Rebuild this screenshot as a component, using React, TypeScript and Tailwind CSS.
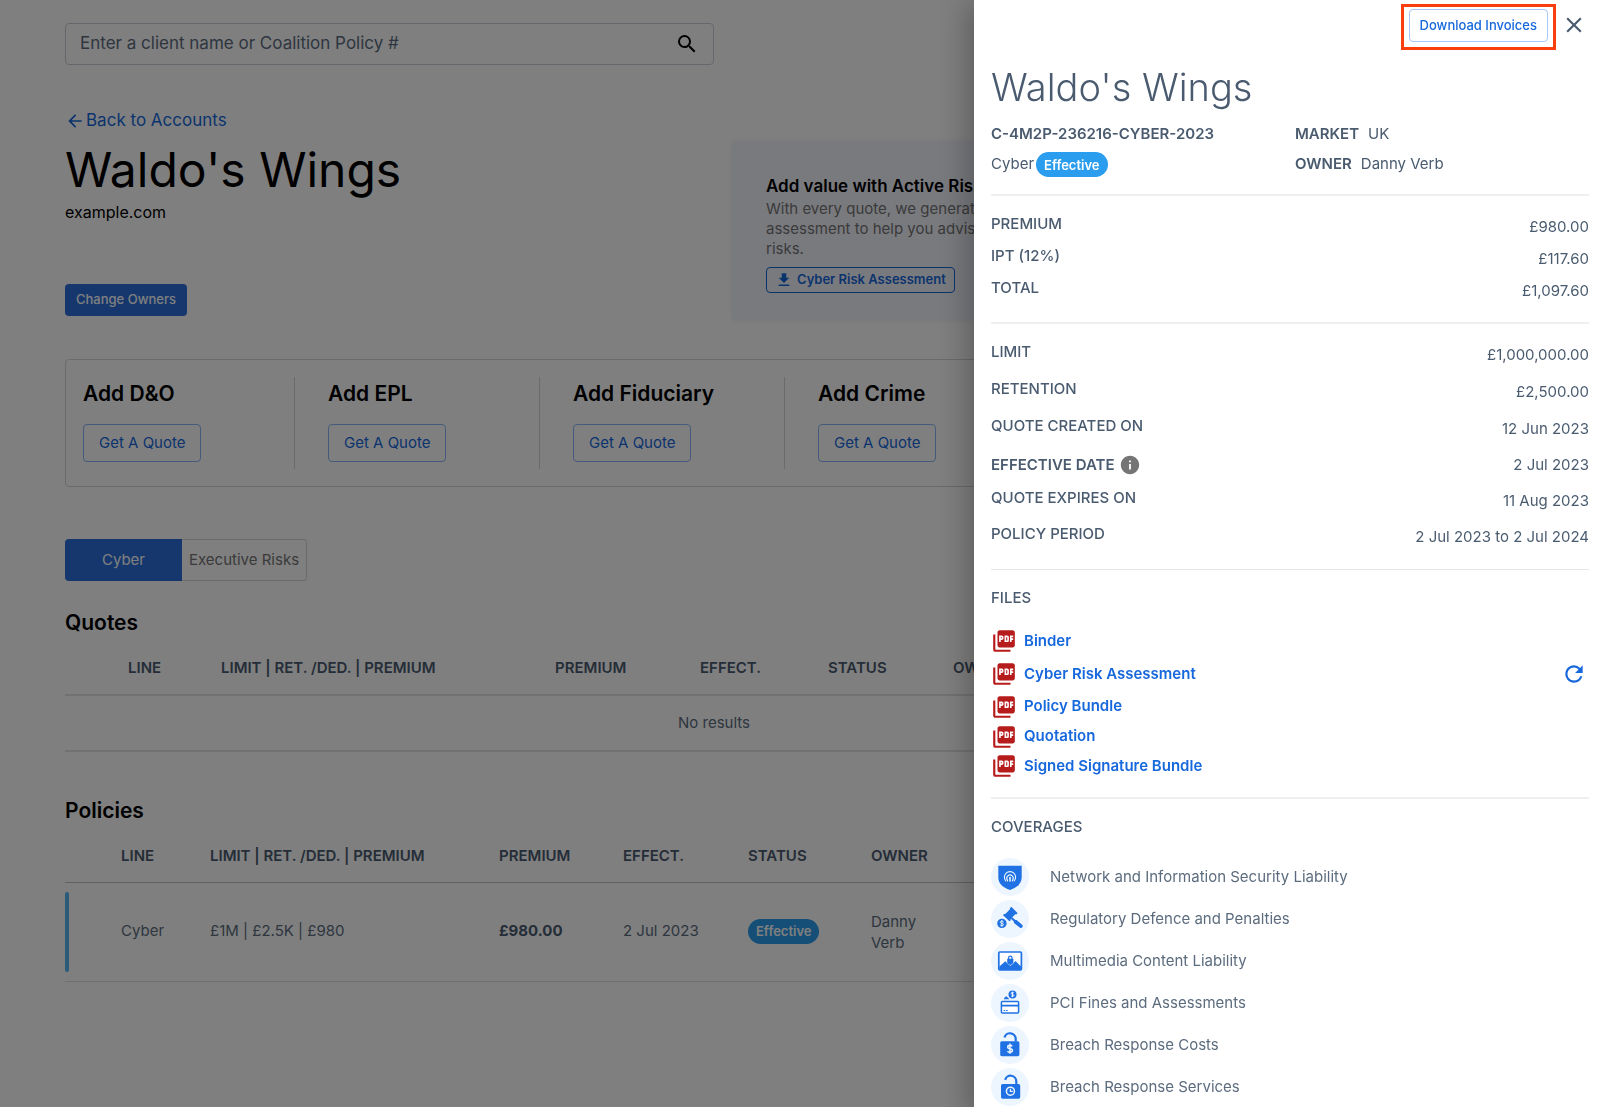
import type { ReactNode } from "react";
import {
  MdArrowBack,
  MdClose,
  MdFileDownload,
  MdInfo,
  MdPictureAsPdf,
  MdRefresh,
  MdSearch,
} from "react-icons/md";

const BLUE = "#2072e4";
const PALE = "#edf6fe";

function StatusPill() {
  return (
    <span className="inline-flex h-[25px] items-center rounded-full bg-[#2a9dee] px-2 text-[13px] font-semibold text-white">
      Effective
    </span>
  );
}

/* ---------- Coverage icons (38 x 38, on a pale disc) ---------- */

function Disc({ children }: { children: ReactNode }) {
  return (
    <svg viewBox="0 0 38 38" className="size-[38px] shrink-0" aria-hidden="true">
      <circle cx="19" cy="19" r="19" fill={PALE} />
      {children}
    </svg>
  );
}

function ShieldIcon() {
  return (
    <Disc>
      <path d="M7.3 7.8h23.4v11.4c0 6-4.2 10.2-11.7 12.8C11.500 29.400 7.300 25.200 7.300 19.200z" fill={BLUE} />
      <g fill="none" stroke={PALE} strokeWidth="1.1" strokeLinecap="round">
        <path d="M14.800 22.900a5.600 5.600 0 1 1 8.400 0" />
        <path d="M16.500 22.900v-.6a3.200 3.200 0 1 1 5 0v.6" />
        <path d="M19 19.600v3.300" strokeWidth="1.600" />
      </g>
    </Disc>
  );
}

function GavelIcon() {
  return (
    <Disc>
      <g fill={BLUE}>
        <path d="M19.300 7.400a1 1 0 0 1 1.500-.1l5.200 5.200a1 1 0 0 1-.9 1.700l-1.100.2-4.300 4.600-.1 1.200a1 1 0 0 1-1.700.5l-5.300-5a1 1 0 0 1 .9-1.700l1.100-.2 4.300-4.500z" />
        <path d="M21.100 17.300l3.300 2.800 1.200-.1 5.500 4.800a1.800 1.800 0 0 1-2.400 2.700l-5.700-4.600-.2-1.500-3-2.700z" />
        <circle cx="10.900" cy="23.400" r="4.700" />
      </g>
      <path
        d="M12.500 21.900c-.4-.6-1-.8-1.600-.8-2.100 0-2.100 2.200 0 2.300 2.200.1 2.200 2.300 0 2.300-.8 0-1.300-.3-1.700-.8M10.900 20.200v6.400"
        fill="none"
        stroke={PALE}
        strokeWidth="1"
      />
    </Disc>
  );
}

function ImageIcon() {
  return (
    <Disc>
      <rect x="7.800" y="10" width="22.600" height="17.800" rx="1" fill="#fff" stroke={BLUE} strokeWidth="1.700" />
      <path d="M8.300 24.500l6-5.300 3.300 3.300 1.800 1.200 1.800-1.200 3.300-3.500 5.500 5.500v3.100H8.300z" fill={BLUE} />
      <path d="M16.200 16.700h6.200v3.600c0 1.200-1.400 1.900-3.100 2.800-1.700-.9-3.100-1.600-3.100-2.800z" fill={BLUE} />
      <path d="M17.600 17v-1.200a1.700 1.700 0 0 1 3.400 0V17" fill="none" stroke={BLUE} strokeWidth="1.200" />
    </Disc>
  );
}

function CardIcon() {
  return (
    <Disc>
      <path d="M12.800 15.300c.2-1.700 1.600-2.300 2.600-3l3.100 3z" fill={BLUE} />
      <circle cx="21.500" cy="10.400" r="4" fill={BLUE} />
      <path
        d="M22.900 9c-.4-.5-.8-.6-1.400-.6-1.700 0-1.700 1.900 0 2 1.800.1 1.800 2 0 2-.7 0-1.100-.3-1.500-.7M21.500 7.700v5.400"
        fill="none"
        stroke={PALE}
        strokeWidth="1"
      />
      <rect x="10.400" y="17.500" width="17.200" height="11.600" rx="1" fill="#fff" stroke={BLUE} strokeWidth="1.500" />
      <path d="M10.400 21.600h17.200" stroke={BLUE} strokeWidth="1.800" />
      <path d="M12.500 26.600h1.600m.8 0h1.800" stroke={BLUE} strokeWidth="1" />
    </Disc>
  );
}

function LockCostIcon() {
  return (
    <Disc>
      <rect x="9.200" y="15.200" width="19.200" height="15" rx="1.600" fill={BLUE} />
      <path d="M24.700 15.600v-2.600a5.700 5.700 0 0 0-11.200-1.500" fill="none" stroke={BLUE} strokeWidth="2.200" />
      <path
        d="M21.200 20.400c-.5-.8-1.300-1.100-2.200-1.100-3 0-3 3.200 0 3.400 3.200.2 3.200 3.600 0 3.600-1.100 0-1.900-.4-2.500-1.200M19 17.600v10.200"
        fill="none"
        stroke={PALE}
        strokeWidth="1.500"
      />
    </Disc>
  );
}

function LockClockIcon() {
  return (
    <Disc>
      <rect x="10" y="16" width="19.200" height="14.700" rx="1.600" fill={BLUE} />
      <path d="M25.300 16.400v-3a5.700 5.700 0 0 0-11.200-1.500" fill="none" stroke={BLUE} strokeWidth="2.200" />
      <circle cx="19.400" cy="23.200" r="4" fill="none" stroke={PALE} strokeWidth="1.500" />
      <path d="M19.400 20.900v2.400h2.400" fill="none" stroke={PALE} strokeWidth="1.200" />
    </Disc>
  );
}

/* ---------- Page behind the drawer ---------- */

const PRODUCTS = ["Add D&O", "Add EPL", "Add Fiduciary", "Add Crime"];
const HEADINGS = ["LINE", "LIMIT | RET. /DED. | PREMIUM", "PREMIUM", "EFFECT.", "STATUS", "OWNER"];

function HeadRow({ line }: { line: string }) {
  return (
    <thead>
      <tr className={line}>
        <td />
        {HEADINGS.map((h) => (
          <th key={h} scope="col" className="pt-[5px] text-left font-semibold whitespace-nowrap text-[#4a5b70]">
            {h}
          </th>
        ))}
      </tr>
    </thead>
  );
}

function AccountPage() {
  return (
    <main className="pt-[23px] pr-[237px] pl-[65px]">
      <form className="flex h-[42px] w-1/2 items-center rounded-[4px] border border-[#c9d1da] pr-[14px] pl-[14px]">
        <input
          type="search"
          aria-label="Search clients"
          placeholder="Enter a client name or Coalition Policy #"
          className="min-w-0 flex-1 text-[17px] outline-none placeholder:text-[#5c6c7e] placeholder:opacity-100"
        />
        <button type="button" aria-label="Search">
          <MdSearch className="size-6" />
        </button>
      </form>

      <section className="mt-11 grid grid-cols-2">
        <div>
          <a href="#accounts" className="flex h-6 items-center gap-px text-[17px] text-[#1668dc]">
            <MdArrowBack className="size-5" />
            Back to Accounts
          </a>
          <h1 className="mt-[7px] text-5xl leading-[60px] whitespace-nowrap">Waldo's Wings</h1>
          <p className="text-base leading-6">example.com</p>
          <button className="mt-[60px] h-8 rounded-[4px] bg-[#2a6fdb] px-[11px] text-[13px] font-medium text-white">
            Change Owners
          </button>
        </div>
        <div className="mt-8 ml-[18px] h-[180px] rounded-[4px] bg-[#f3f5fd] px-[34px] pt-[33px] shadow-[0_0_6px_rgba(0,0,0,0.06)]">
          <h2 className="text-[17px] leading-[25px] font-semibold">Add value with Active Risk</h2>
          <p className="max-w-[245px] text-[15px] leading-5 text-[#757575]">
            With every quote, we generate an assessment to help you advise on risks.
          </p>
          <button className="mt-2 flex h-[26px] items-center gap-1 rounded-[4px] border border-[#1668dc] px-2 text-[13px] font-semibold text-[#1668dc]">
            <MdFileDownload className="size-[18px]" />
            Cyber Risk Assessment
          </button>
        </div>
      </section>

      <section className="mt-[38px] flex h-32 gap-[33px] rounded-[4px] border border-[#d6d6d6] px-[17px] py-[17px]">
        {PRODUCTS.map((name) => (
          <div key={name} className="w-[212px] border-r border-[#d6d6d6]">
            <h3 className="mt-[3px] text-[21px] leading-7 font-semibold">{name}</h3>
            <button className="mt-4 h-[38px] rounded-[4px] border border-[#8ab4f8] px-[15px] text-[15px] whitespace-nowrap text-[#1668dc]">
              Get A Quote
            </button>
          </div>
        ))}
      </section>

      <div className="mt-[52px] flex h-[42px] text-[15px]">
        <button className="w-[117px] rounded-l-[4px] bg-[#2a6fdb] text-white">Cyber</button>
        <button className="rounded-r-[4px] border border-l-0 border-[#d6d6d6] px-[7px] text-[#757575]">
          Executive Risks
        </button>
      </div>

      <h2 className="mt-7 text-[21px] leading-7 font-semibold">Quotes</h2>
      <table className="w-full table-fixed text-[15px] text-[#5c6c7e]">
        <colgroup>
          <col className="w-[63px]" />
          <col className="w-[93px]" />
          <col className="w-[334px]" />
          <col className="w-[145px]" />
          <col className="w-[128px]" />
          <col className="w-[125px]" />
          <col />
        </colgroup>
        <HeadRow line="h-[58px] border-b-2 border-[#e4e4e4]" />
        <tbody>
          <tr className="h-14 border-b-2 border-[#e4e4e4]">
            <td colSpan={7} className="text-center">
              No results
            </td>
          </tr>
        </tbody>
      </table>

      <h2 className="mt-[45px] text-[21px] leading-7 font-semibold">Policies</h2>
      <table className="w-full table-fixed text-[15px] text-[#5c6c7e]">
        <colgroup>
          <col className="w-[56px]" />
          <col className="w-[89px]" />
          <col className="w-[289px]" />
          <col className="w-[124px]" />
          <col className="w-[125px]" />
          <col className="w-[123px]" />
          <col />
        </colgroup>
        <HeadRow line="h-[57px] border-b border-[#c4c4c4]" />
        <tbody>
          <tr className="h-[99px] border-b border-[#dedede]">
            <td>
              <div className="h-20 w-1 rounded-full bg-[#55b7f3]" />
            </td>
            <td>Cyber</td>
            <td>£1M | £2.5K | £980</td>
            <td className="font-bold text-[#4a5b70]">£980.00</td>
            <td>2 Jul 2023</td>
            <td>
              <StatusPill />
            </td>
            <td>
              <div className="w-[60px] leading-[21px]">Danny Verb</div>
            </td>
          </tr>
        </tbody>
      </table>
    </main>
  );
}

/* ---------- Drawer ---------- */

const COSTS = [
  ["PREMIUM", "£980.00"],
  ["IPT (12%)", "£117.60"],
  ["TOTAL", "£1,097.60"],
];

const AMOUNTS = [
  ["LIMIT", "£1,000,000.00"],
  ["RETENTION", "£2,500.00"],
];

const DATES = [
  ["QUOTE CREATED ON", "12 Jun 2023"],
  ["EFFECTIVE DATE", "2 Jul 2023"],
  ["QUOTE EXPIRES ON", "11 Aug 2023"],
  ["POLICY PERIOD", "2 Jul 2023 to 2 Jul 2024"],
];

const COVERAGES: [string, () => ReactNode][] = [
  ["Network and Information Security Liability", ShieldIcon],
  ["Regulatory Defence and Penalties", GavelIcon],
  ["Multimedia Content Liability", ImageIcon],
  ["PCI Fines and Assessments", CardIcon],
  ["Breach Response Costs", LockCostIcon],
  ["Breach Response Services", LockClockIcon],
];

function Entry({ label, value, height }: { label: string; value: string; height: string }) {
  return (
    <div className={`flex justify-between ${height}`}>
      <dt className="leading-5 font-medium">{label}</dt>
      <dd className="leading-[26px]">{value}</dd>
    </div>
  );
}

function FileRow({ name, height, refresh }: { name: string; height: string; refresh?: boolean }) {
  return (
    <li className={`flex items-center ${height}`}>
      <a href="#file" className="flex items-center gap-[7px] font-semibold text-[#1668dc]">
        <MdPictureAsPdf className="size-[26px] text-[#b71c1c]" />
        {name}
      </a>
      {refresh && (
        <button aria-label="Refresh assessment" className="mr-[2px] ml-auto text-[#1668dc]">
          <MdRefresh className="size-[26px]" />
        </button>
      )}
    </li>
  );
}

function PolicyDrawer() {
  return (
    <aside className="fixed inset-y-0 right-0 w-[626px] overflow-hidden bg-white pr-[11px] pl-[17px] text-[15px] text-[#4a5b70] shadow-[0_6px_30px_5px_rgba(0,0,0,0.3)]">
      <div className="flex h-[50px] items-start justify-end gap-[5px] pt-1">
        <div className="border-[3px] border-[#fb3f0c] px-[5px] pt-[2px] pb-[5px]">
          <button className="block h-[33px] rounded-[4px] border border-[#a8c7fa] px-[10px] text-[13px] font-medium whitespace-nowrap text-[#1668dc]">
            Download Invoices
          </button>
        </div>
        <button aria-label="Close" className="mt-2 mr-[2px]">
          <MdClose className="size-[26px]" />
        </button>
      </div>

      <h2 className="mt-3 text-[38px] leading-[50px] font-light">Waldo's Wings</h2>

      <div className="mt-[7px] flex h-[77px] border-b-2 border-[#efefef]">
        <div className="w-[304px]">
          <p className="leading-[30px] font-semibold">C-4M2P-236216-CYBER-2023</p>
          <p className="flex items-start gap-[2px] leading-[30px]">
            Cyber
            <span className="mt-[3px] flex">
              <StatusPill />
            </span>
          </p>
        </div>
        <dl className="grid content-start leading-[30px]">
          <div className="flex gap-[9px]">
            <dt className="font-semibold">MARKET</dt>
            <dd>UK</dd>
          </div>
          <div className="flex gap-[9px]">
            <dt className="font-semibold">OWNER</dt>
            <dd>Danny Verb</dd>
          </div>
        </dl>
      </div>

      <dl className="border-b-2 border-[#efefef] pt-[18px] pb-3">
        {COSTS.map(([label, value]) => (
          <Entry key={label} label={label} value={value} height="h-8" />
        ))}
      </dl>

      <dl className="border-b border-[#e6e6e6] pt-[18px] pb-[9px]">
        {AMOUNTS.map(([label, value]) => (
          <Entry key={label} label={label} value={value} height="h-[37px]" />
        ))}
        {DATES.map(([label, value]) =>
          label === "EFFECTIVE DATE" ? (
            <div key={label} className="flex h-9 items-start justify-between leading-[26px]">
              <dt className="flex items-center gap-1 font-semibold">
                {label}
                <MdInfo className="size-[22px] text-[#757575]" />
              </dt>
              <dd>{value}</dd>
            </div>
          ) : (
            <Entry key={label} label={label} value={value} height="h-9" />
          ),
        )}
      </dl>

      <section className="border-b-2 border-[#efefef] pt-[18px] pb-4">
        <h3 className="leading-5 font-medium">FILES</h3>
        <ul className="mt-[17px]">
          <FileRow name="Binder" height="h-8" />
          <FileRow name="Cyber Risk Assessment" height="h-[34px]" refresh />
          <FileRow name="Policy Bundle" height="h-[31px]" />
          <FileRow name="Quotation" height="h-[29px]" />
          <FileRow name="Signed Signature Bundle" height="h-[30px]" />
        </ul>
      </section>

      <section className="pt-[18px]">
        <h3 className="leading-5 font-medium">COVERAGES</h3>
        <ul className="mt-[21px] grid gap-1">
          {COVERAGES.map(([name, Icon]) => (
            <li key={name} className="flex items-center gap-[21px] text-[#5c6c7e]">
              <Icon />
              {name}
            </li>
          ))}
        </ul>
      </section>
    </aside>
  );
}

export default function App() {
  return (
    <div className="h-screen overflow-hidden bg-white font-['Inter',sans-serif] text-black">
      <AccountPage />
      <div className="fixed inset-0 bg-black/50" />
      <PolicyDrawer />
    </div>
  );
}
